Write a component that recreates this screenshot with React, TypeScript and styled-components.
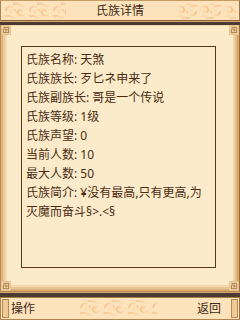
import styled, { createGlobalStyle } from "styled-components";

const GlobalStyle = createGlobalStyle`
  html, body {
    margin: 0;
    padding: 0;
    background: #fcebcb;
  }
  body {
    font-family: "Noto Sans", "Noto Sans CJK SC", sans-serif;
  }
`;

const Screen = styled.div`
  width: 240px;
  height: 320px;
  display: flex;
  flex-direction: column;
  background: #fcebcb;
  overflow: hidden;
`;

const Bar = styled.div<{ $top?: boolean }>`
  position: relative;
  height: ${(p) => (p.$top ? "19px" : "21px")};
  background: #fde3bb;
  border-top: 1px solid ${(p) => (p.$top ? "#c89c64" : "#a97c48")};
  border-bottom: 1px solid ${(p) => (p.$top ? "#8c6232" : "#b08450")};
  border-left: 1px solid #b08450;
  border-right: 1px solid #9c7040;
  display: flex;
  align-items: center;
  justify-content: ${(p) => (p.$top ? "center" : "space-between")};
  color: #3e2a18;
  font-size: 12px;
`;

const Separator = styled.div<{ $height: number }>`
  height: ${(p) => p.$height}px;
  background: #4a3a32;
  border-top: 1px solid #d8aa70;
`;

const BarTitle = styled.span`
  position: relative;
  z-index: 1;
  line-height: 12px;
  margin-top: 1px;
`;

const Ornament = styled.svg<{ $side: "left" | "right" | "center" }>`
  position: absolute;
  top: 1px;
  ${(p) =>
    p.$side === "left"
      ? "left: 3px;"
      : p.$side === "right"
      ? "right: 3px;"
      : "left: 78px;"}
`;

const SoftKey = styled.div<{ $align: "left" | "right" }>`
  display: flex;
  align-items: center;
  gap: ${(p) => (p.$align === "left" ? "1px" : "9px")};
  flex-direction: ${(p) => (p.$align === "left" ? "row" : "row-reverse")};
  position: relative;
  z-index: 1;
  height: 100%;
`;

const KeyTab = styled.div`
  width: 5px;
  height: 17px;
  margin: 0 1px;
  background: #edca96;
  border: 1px solid #b88a52;
`;

const KeyLabel = styled.span`
  line-height: 12px;
  font-size: 12px;
  margin-top: 1px;
`;

const Frame = styled.div`
  position: relative;
  flex: 1;
  background: #fcebcb;
  border-left: 1px solid #b88c5a;
  border-right: 1px solid #9a6c3c;
  border-bottom: 1px solid #b48654;
  box-shadow: inset 2px 0 0 #e2b47a, inset -2px 0 0 #d4a468,
    inset 4px 0 0 #eec898, inset -4px 0 0 #e6bc84,
    inset 6px 0 0 #f5dab0, inset -6px 0 0 #f2d2a4,
    inset 0 -2px 0 #dcae74, inset 0 -4px 0 #ecc592, inset 0 -6px 0 #f5d8ae,
    inset 0 1px 0 #f3d6aa;
  padding: 21px 23px 23px 20px;
  display: flex;
`;

const Corner = styled.svg<{ $pos: "tl" | "tr" | "bl" | "br" }>`
  position: absolute;
  ${(p) => (p.$pos[0] === "t" ? "top: 0;" : "bottom: 0;")}
  ${(p) => (p.$pos[1] === "l" ? "left: 0;" : "right: 0;")}
`;

const InfoBox = styled.div`
  flex: 1;
  border: 1px solid #5a3a1c;
  padding: 3px 4px;
  color: #4a2c12;
  font-size: 12px;
`;

const InfoLine = styled.div`
  height: 19px;
  line-height: 19px;
  white-space: nowrap;
`;

const CloudPattern = ({ side, width }: { side: "left" | "right" | "center"; width: number }) => {
  const id = `fade-${side}`;
  const from = side === "right" ? 0 : 1;
  return (
    <Ornament $side={side} width={width} height={18} viewBox={`0 0 ${width} 18`}>
      <defs>
        <linearGradient id={id} x1="0" x2="1" y1="0" y2="0">
          <stop offset="0" stopColor="#f7c088" stopOpacity={from} />
          <stop offset="1" stopColor="#f7c088" stopOpacity={1 - from} />
        </linearGradient>
      </defs>
      <g fill="none" stroke={`url(#${id})`} strokeWidth="1.6">
        {Array.from({ length: Math.ceil(width / 24) }).map((_, i) => (
          <g key={i} transform={`translate(${i * 24} 0)`}>
            <path d="M2 9 C2 4 9 3 10 7 C11 10 7 11 6 9" />
            <path d="M22 9 C22 14 15 15 14 11 C13 8 17 7 18 9" />
            <path d="M10 7 L14 11" />
            <path d="M1 14 L7 14 L9 16 L15 16" />
            <path d="M9 2 L15 2 L17 4 L23 4" />
          </g>
        ))}
      </g>
    </Ornament>
  );
};

const CornerMark = ({ pos }: { pos: "tl" | "tr" | "bl" | "br" }) => (
  <Corner $pos={pos} width={10} height={10} viewBox="0 0 10 10">
    <rect x="0" y="0" width="10" height="10" fill="#e9c490" />
    <rect x="1" y="1" width="8" height="8" fill="#f4d8aa" />
    <path
      d="M2 2 H8 V8 H2 V4 H6 V6 H4"
      fill="none"
      stroke="#a07040"
      strokeWidth="1"
      transform="translate(0.5 0.5) scale(0.9)"
    />
  </Corner>
);

const lines = [
  "氏族名称: 天煞",
  "氏族族长: 歹匕ネ申来了",
  "氏族副族长: 哥是一个传说",
  "氏族等级: 1级",
  "氏族声望: 0",
  "当前人数: 10",
  "最大人数: 50",
  "氏族简介: ¥没有最高,只有更高,为",
  "灭魔而奋斗§>.<§",
];

export default function App() {
  return (
    <Screen>
      <GlobalStyle />
      <Bar $top>
        <CloudPattern side="left" width={62} />
        <BarTitle>氏族详情</BarTitle>
        <CloudPattern side="right" width={62} />
      </Bar>
      <Separator $height={3} />
      <Frame>
        <CornerMark pos="tl" />
        <CornerMark pos="tr" />
        <CornerMark pos="bl" />
        <CornerMark pos="br" />
        <InfoBox>
          {lines.map((line) => (
            <InfoLine key={line}>{line}</InfoLine>
          ))}
        </InfoBox>
      </Frame>
      <Separator $height={4} />
      <Bar>
        <CloudPattern side="center" width={78} />
        <SoftKey $align="left">
          <KeyTab />
          <KeyLabel>操作</KeyLabel>
        </SoftKey>
        <SoftKey $align="right">
          <KeyTab />
          <KeyLabel>返回</KeyLabel>
        </SoftKey>
      </Bar>
    </Screen>
  );
}
